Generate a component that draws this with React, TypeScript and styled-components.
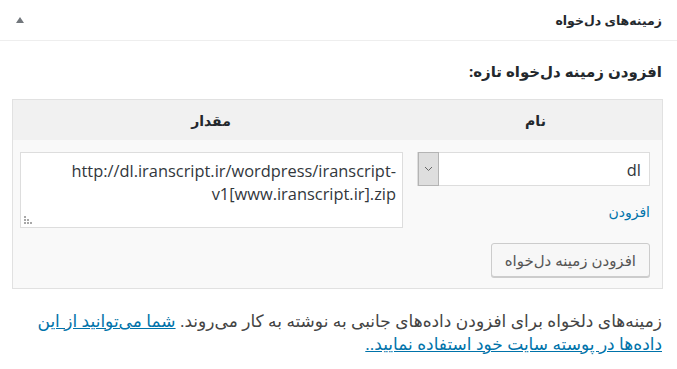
import React from "react";
import styled, { createGlobalStyle } from "styled-components";

const GlobalStyle = createGlobalStyle`
    html, body {
        margin: 0;
        background: #ffffff;
    }
    body {
        font-family: "Open Sans", "DejaVu Sans", sans-serif;
        color: #444;
    }
`;

const Postbox = styled.div`
    direction: rtl;
    width: 677px;
    background: #fff;
`;

const BoxHeader = styled.div`
    display: flex;
    align-items: center;
    justify-content: space-between;
    height: 41px;
    padding: 0 15px 0 12px;
    border-bottom: 1px solid #eeeeee;
    box-sizing: border-box;
`;

const BoxTitle = styled.h2`
    margin: 0;
    font-size: 12.5px;
    font-weight: 700;
    color: #23282d;
`;

const Toggle = styled.span`
    width: 0;
    height: 0;
    margin-left: 4px;
    border-left: 4px solid transparent;
    border-right: 4px solid transparent;
    border-bottom: 6px solid #72777c;
`;

const Inside = styled.div`
    padding: 0 14px 12px 12px;
`;

const AddTitle = styled.p`
    margin: 20px 1px 18px 0;
    font-size: 15px;
    font-weight: 700;
    line-height: 20px;
    color: #23282d;
`;

const FieldsTable = styled.table`
    width: 651px;
    table-layout: fixed;
    border: 1px solid #e1e1e1;
    border-spacing: 0;
    background: #f9f9f9;
`;

const HeadCell = styled.th<{ $width: number }>`
    width: ${({ $width }) => $width}px;
    height: 40px;
    padding: 0;
    background: #f1f1f1;
    font-size: 14px;
    font-weight: 700;
    color: #23282d;
    text-align: center;
`;

const NameCell = styled.td`
    vertical-align: top;
    padding: 12px 12px 8px 8px;
`;

const ValueCell = styled.td`
    vertical-align: top;
    padding: 12px 6px 0 7px;
`;

const FooterCell = styled.td`
    padding: 13px 12px 11px 8px;
`;

const Combo = styled.div`
    display: flex;
    height: 34px;
    border: 1px solid #dddddd;
    background: #fff;
    box-sizing: border-box;
`;

const KeyInput = styled.input`
    flex: 1;
    min-width: 0;
    border: 0;
    outline: none;
    padding: 0 8px;
    font-family: "Open Sans", sans-serif;
    font-size: 16.4px;
    color: #32373c;
    background: transparent;
    direction: rtl;
`;

const DropButton = styled.span`
    display: flex;
    align-items: center;
    justify-content: center;
    width: 19px;
    margin: -1px -1px -1px 0;
    background: #dedede;
    border: 1px solid #b4b4b4;
`;

const AddLink = styled.a`
    display: block;
    margin-top: 16px;
    font-size: 14px;
    line-height: 20px;
    color: #0073aa;
    text-decoration: none;
`;

const AreaWrap = styled.div`
    position: relative;
    width: 383px;
    height: 76px;
`;

const ValueArea = styled.textarea`
    display: block;
    width: 100%;
    height: 100%;
    box-sizing: border-box;
    resize: none;
    border: 1px solid #dddddd;
    outline: none;
    margin: 0;
    padding: 6px 6px;
    font-family: "Open Sans", sans-serif;
    font-size: 16.4px;
    line-height: 23px;
    color: #32373c;
    direction: rtl;
    overflow: hidden;
`;

const Grip = styled.svg`
    position: absolute;
    left: 4px;
    bottom: 3px;
`;

const AddButton = styled.button`
    height: 34px;
    padding: 0 13px;
    border: 1px solid #cccccc;
    border-radius: 3px;
    background: #f7f7f7;
    box-shadow: 0 1px 0 #cccccc;
    font-family: "Open Sans", "DejaVu Sans", sans-serif;
    font-size: 15px;
    color: #555;
    direction: rtl;
`;

const Note = styled.p`
    margin: 20px 1px 0 0;
    font-size: 17px;
    line-height: 23px;
    color: #444;
`;

const NoteLink = styled.a`
    color: #0073aa;
    text-decoration: underline;
`;

const Chevron = () => (
    <svg width="9" height="6" viewBox="0 0 9 6">
        <path d="M1 1l3.5 3.5L8 1" fill="none" stroke="#666" strokeWidth="1" />
    </svg>
);

const GripDots = () => {
    const dots: [number, number][] = [
        [0, 0],
        [0, 3],
        [3, 3],
        [0, 6],
        [3, 6],
        [6, 6],
    ];
    return (
        <Grip width="9" height="9" viewBox="0 0 9 9">
            {dots.map(([x, y]) => (
                <rect key={`${x}-${y}`} x={x} y={y} width="2" height="2" fill="#a8a8a8" />
            ))}
        </Grip>
    );
};

export default function App() {
    return (
        <>
            <GlobalStyle />
            <Postbox>
                <BoxHeader>
                    <BoxTitle>زمینه‌های دل‌خواه</BoxTitle>
                    <Toggle />
                </BoxHeader>
                <Inside>
                    <AddTitle>افزودن زمینه دل‌خواه تازه:</AddTitle>
                    <FieldsTable>
                        <thead>
                            <tr>
                                <HeadCell $width={253}>نام</HeadCell>
                                <HeadCell $width={396}>مقدار</HeadCell>
                            </tr>
                        </thead>
                        <tbody>
                            <tr>
                                <NameCell>
                                    <Combo>
                                        <KeyInput defaultValue="dl" />
                                        <DropButton>
                                            <Chevron />
                                        </DropButton>
                                    </Combo>
                                    <AddLink href="#">افزودن</AddLink>
                                </NameCell>
                                <ValueCell>
                                    <AreaWrap>
                                        <ValueArea defaultValue="http://dl.iranscript.ir/wordpress/iranscript-v1[www.iranscript.ir].zip" />
                                        <GripDots />
                                    </AreaWrap>
                                </ValueCell>
                            </tr>
                            <tr>
                                <FooterCell colSpan={2}>
                                    <AddButton>افزودن زمینه دل‌خواه</AddButton>
                                </FooterCell>
                            </tr>
                        </tbody>
                    </FieldsTable>
                    <Note>
                        زمینه‌های دلخواه برای افزودن داده‌های جانبی به نوشته به کار می‌روند.{" "}
                        <NoteLink href="#">شما می‌توانید از این داده‌ها در پوسته سایت خود استفاده نمایید..</NoteLink>
                    </Note>
                </Inside>
            </Postbox>
        </>
    );
}
